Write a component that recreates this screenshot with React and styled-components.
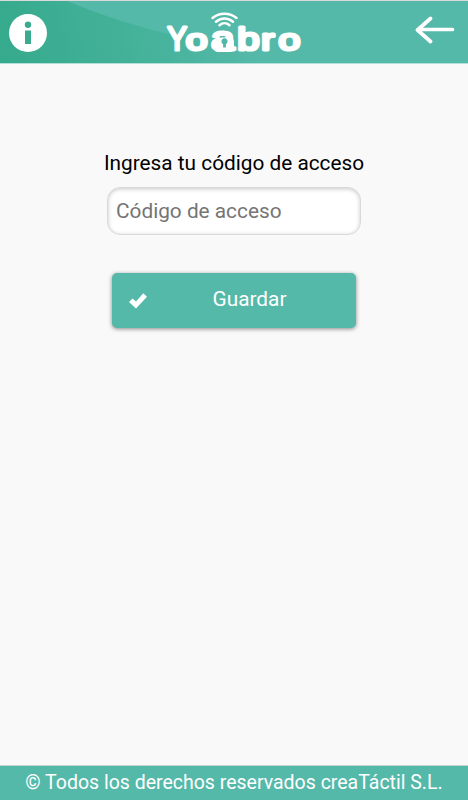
import React, { useState } from "react";
import styled, { createGlobalStyle } from "styled-components";

const App = () => {
    const [code, setCode] = useState("");

    return (
        <Page>
            <GlobalStyle />
            <Header>
                <HeaderWave />
                <InfoButton aria-label="Información">
                    <InfoIcon />
                </InfoButton>
                <Logo />
                <BackButton aria-label="Volver">
                    <ArrowIcon />
                </BackButton>
            </Header>
            <Content>
                <Label htmlFor="code">Ingresa tu código de acceso</Label>
                <CodeInput
                    id="code"
                    placeholder="Código de acceso"
                    value={code}
                    onChange={(e) => setCode(e.target.value)}
                />
                <SaveButton type="button">
                    <CheckIcon />
                    <span>Guardar</span>
                </SaveButton>
            </Content>
            <Footer>© Todos los derechos reservados creaTáctil S.L.</Footer>
        </Page>
    );
};

export default App;


const HeaderWave = () => (
    <Wave viewBox="0 0 468 62" preserveAspectRatio="none">
        <defs>
            <linearGradient id="wave" x1="0" y1="40" x2="250" y2="0" gradientUnits="userSpaceOnUse">
                <stop offset="0" stopColor="#36aa8d" />
                <stop offset="0.55" stopColor="#45b29a" />
                <stop offset="1" stopColor="#55b9a9" />
            </linearGradient>
        </defs>
        <path d="M0 0H67C93 11 123 21 156 30C195 39 235 44 290 47V62H0Z" fill="url(#wave)" />
    </Wave>
);

const InfoIcon = () => (
    <svg width="38" height="38" viewBox="0 0 38 38">
        <circle cx="19" cy="19" r="19" fill="#fff" />
        <circle cx="19" cy="10.7" r="3.2" fill="#3bab90" />
        <rect x="16" y="16.5" width="6" height="13.5" fill="#3bab90" />
    </svg>
);

const ArrowIcon = () => (
    <svg width="40" height="28" viewBox="0 0 40 28">
        <path
            d="M37.5 13.5H3M15.5 2.5L2.5 14L15.5 25.5"
            fill="none"
            stroke="#fff"
            strokeWidth="3.7"
            strokeLinecap="round"
            strokeLinejoin="round"
        />
    </svg>
);

const CheckIcon = () => (
    <svg width="18" height="16" viewBox="0 0 18 16">
        <path d="M0 9L3.5 5.5L7 8.5L14.3 0.3L18 3.8L7 15.5Z" fill="#fff" />
    </svg>
);

const Logo = () => (
    <LogoSvg viewBox="0 0 140 44">
        <g fill="none" stroke="#fff" strokeWidth="2.5" strokeLinecap="round">
            <path d="M48.5 6C55 0.2 66 0.2 72.5 6" />
            <path d="M52 9.7C57 5.4 64 5.4 69 9.7" />
            <path d="M55.5 13.2C58.5 10.6 62.5 10.6 65.5 13.2" />
        </g>
        {/* body of the padlock, behind the "a" */}
        <rect x="50" y="26" width="20" height="14" rx="4" fill="#fff" />
        <Wordmark transform="scale(1.35 1)" y="38.5">
            <tspan x="2.4" fontSize="33" textLength="14.6" lengthAdjust="spacingAndGlyphs">Y</tspan>
            <tspan x="16.1" fontSize="29">o</tspan>
            <tspan x="34.8" fontSize="34" textLength="17.4" lengthAdjust="spacingAndGlyphs">a</tspan>
            <tspan x="54.2" fontSize="32" textLength="16.6" lengthAdjust="spacingAndGlyphs">b</tspan>
            <tspan x="72.1" fontSize="29">r</tspan>
            <tspan x="84.9" fontSize="29">o</tspan>
        </Wordmark>
        <path d="M59.1 35.6V32.2A3.1 3.1 0 1 1 61.9 32.2V35.6Z" fill="#50b7a5" />
    </LogoSvg>
);


const GlobalStyle = createGlobalStyle`
  * {
    box-sizing: border-box;
  }
  body {
    margin: 0;
    background: #f9f9f9;
    font-family: Roboto, "Liberation Sans", sans-serif;
  }
`;

const Page = styled.div`
  height: 100vh;
  display: flex;
  flex-direction: column;
  background: #f9f9f9;
`;

const Header = styled.header`
  position: relative;
  height: 64px;
  flex: none;
  display: flex;
  align-items: flex-start;
  justify-content: space-between;
  padding: 0 13px 0 9px;
  background: #55b9a9;
  border-top: 1px solid #dadada;
  border-bottom: 1px solid #b4dfd7;
`;

const Wave = styled.svg`
  position: absolute;
  inset: 0;
  width: 100%;
  height: 100%;
`;

const LogoSvg = styled.svg`
  position: relative;
  width: 140px;
  height: 44px;
  margin: 11px 0 0 6px;
  overflow: visible;
`;

const Wordmark = styled.text`
  font-family: "Liberation Sans", sans-serif;
  fill: #fff;
  stroke: #fff;
  stroke-width: 3px;
  stroke-linejoin: round;
`;

const IconButton = styled.button`
  position: relative;
  display: flex;
  padding: 0;
  border: 0;
  background: none;
`;

const InfoButton = styled(IconButton)`
  margin-top: 13px;
`;

const BackButton = styled(IconButton)`
  margin-top: 15px;
`;

const Content = styled.main`
  flex: 1;
  display: flex;
  flex-direction: column;
  align-items: center;
  padding-top: 87px;
`;

const Label = styled.label`
  font-size: 20.8px;
  line-height: 24px;
  color: #000;
`;

const CodeInput = styled.input`
  width: 254px;
  height: 48px;
  margin-top: 12px;
  padding: 0 8px;
  border: 1px solid #d9d9d9;
  border-radius: 13px;
  background: #fff;
  box-shadow: inset 0 1px 4px rgba(0, 0, 0, 0.22);
  font: 20.8px Roboto, "Liberation Sans", sans-serif;

  &::placeholder {
    color: #757575;
  }
`;

const SaveButton = styled.button`
  width: 244px;
  height: 55px;
  margin-top: 38px;
  padding: 0 17px;
  display: flex;
  align-items: center;
  border: 0;
  border-radius: 5px;
  background: #55b9a9;
  box-shadow: 0 1px 4px rgba(0, 0, 0, 0.45);
  color: #fff;
  font: 400 20.8px Roboto, "Liberation Sans", sans-serif;

  span {
    flex: 1;
    padding: 0 0 3px 13px;
    text-align: center;
  }
`;

const Footer = styled.footer`
  height: 35px;
  flex: none;
  border-top: 1px solid #c4d4d1;
  background: #55b9a9;
  color: #fff;
  font-size: 19.5px;
  line-height: 33px;
  text-align: center;
  white-space: nowrap;
`;
